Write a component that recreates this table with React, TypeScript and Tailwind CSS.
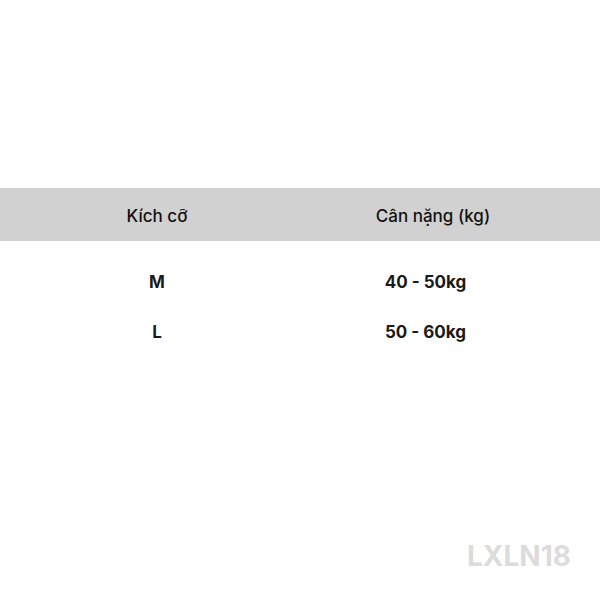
export default function App() {
  const rows = [
    { size: 'M', weight: '40 - 50kg' },
    { size: 'L', weight: '50 - 60kg' },
  ];

  return (
    <div className="w-[600px] h-[600px] bg-white flex flex-col" style={{ fontFamily: 'Inter, "Noto Sans", sans-serif' }}>
      <div className="h-[188px]" />
      <div className="h-[53px] bg-[#d1d1d1] flex items-center pt-[4px] text-[17px] text-[#111] font-medium">
        <div className="w-[314px] text-center">Kích cỡ</div>
        <div className="w-[238px] text-center">Cân nặng (kg)</div>
      </div>
      <div className="flex flex-col pt-[31px] gap-[28px] text-[17px] font-bold text-[#1a1a1a]">
        {rows.map((r) => (
          <div key={r.size} className="flex h-[22px] items-center">
            <div className="w-[314px] text-center">{r.size}</div>
            <div className="w-[223px] text-center">{r.weight}</div>
          </div>
        ))}
      </div>
      <div className="flex-1" />
      <div className="flex justify-end pr-[29px] pb-[30px] text-[28px] font-bold text-[#dcdcdc] leading-none">
        LXLN18
      </div>
    </div>
  );
}
